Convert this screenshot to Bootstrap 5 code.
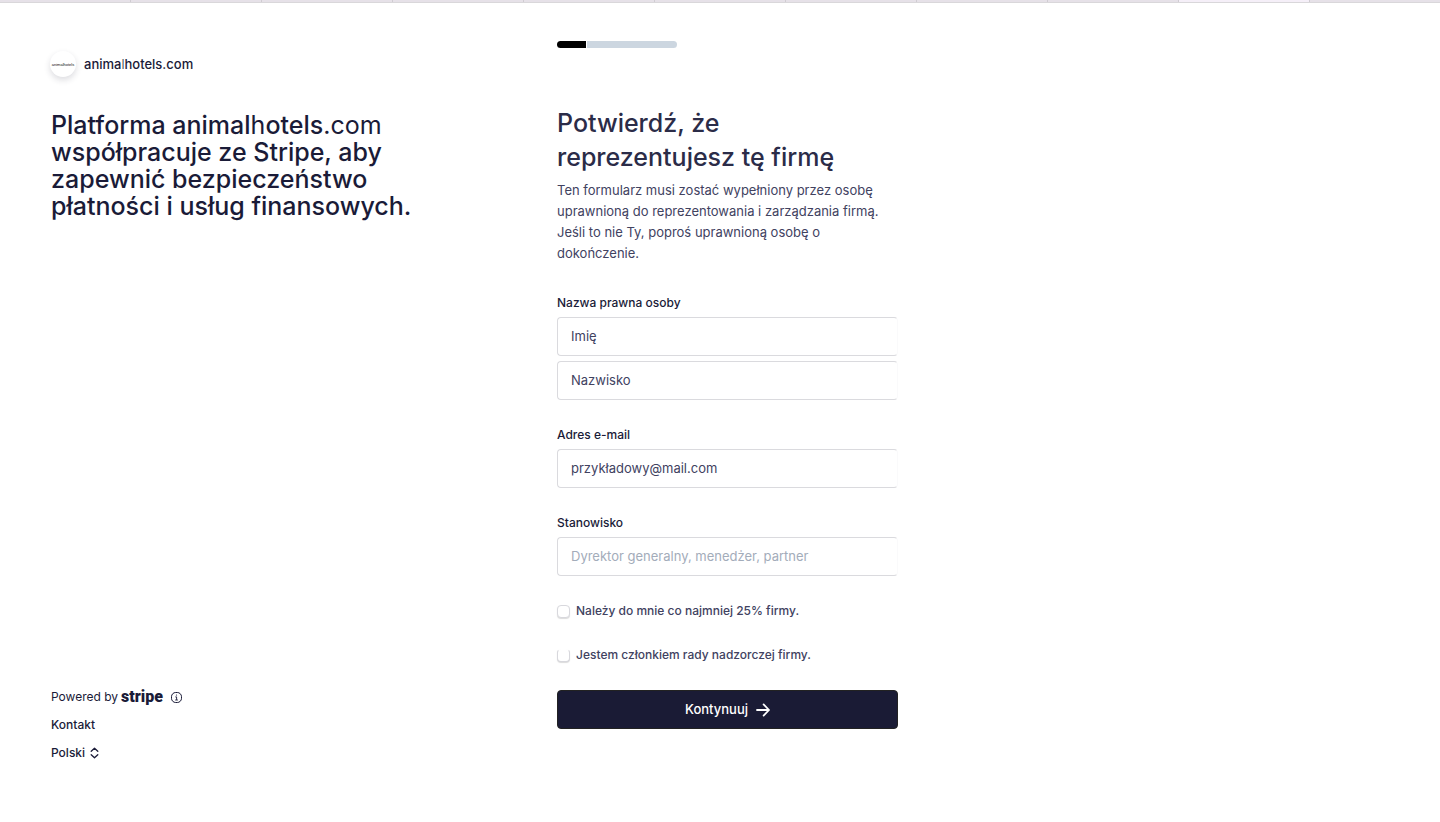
<!DOCTYPE html>
<html lang="pl">
<head>
<meta charset="utf-8">
<meta name="viewport" content="width=device-width, initial-scale=1">
<title>Potwierdź, że reprezentujesz tę firmę</title>
<link href="https://cdn.jsdelivr.net/npm/bootstrap@5.3.0/dist/css/bootstrap.min.css" rel="stylesheet">
<style>
  :root { --ink: #1a1b38; --body: #41425f; --line: #dadade; }
  body { font-family: Inter, "Liberation Sans", sans-serif; font-size: 13px; line-height: 21px; color: var(--ink); background: #fff; }
  a { color: inherit; text-decoration: none; }

  /* strip of browser tabs above the page */
  .tab-strip { height: 3px; background: #e6e1e8; border-bottom: 1px solid #d9d7da; }
  .tab-strip span { border-right: 1px solid #d0ccd2; }
  .tab-strip span:last-child { border-right: 0; }
  .tab-strip .is-open { background: #f5eff8; }

  .side-panel { padding: 48px 0 60px 51px; }
  .form-panel { padding: 38px 24px 60px 0; }
  @media (min-width: 992px) {
    .side-panel { flex: 0 0 557px; }
    .form-panel { flex: 0 1 365px; }
  }
  @media (max-width: 991px) {
    .form-panel { padding-left: 51px; }
  }

  .avatar { width: 26px; height: 26px; margin-left: -1px; font: 4px "Liberation Sans", sans-serif; color: #111; box-shadow: 0 3px 6px rgba(40, 40, 60, .16); }
  .brand-name { font-size: 13px; font-weight: 500; }
  .thin { font-weight: 300; }
  .normal { font-weight: 400; }
  .pitch { font-size: 25px; line-height: 27px; font-weight: 500; margin-top: 35px; max-width: 400px; }

  .side-foot { font-size: 12px; line-height: 18px; gap: 10px; }
  .stripe-mark { font: 900 16px/18px Roboto, "Liberation Sans", sans-serif; margin-left: 3px; }
  .lang-select { appearance: none; border: 0; background: none; padding: 0; color: inherit; font-weight: 500; }

  .steps { width: 120px; height: 7px; gap: 1px; border-radius: 4px; }
  .steps div { background: #ccd6e0; }
  .steps .done { background: #000; }

  .title { font-size: 25px; line-height: 34px; font-weight: 500; color: #2b2c48; margin: 58px 0 6px; }
  .lede { color: var(--body); margin: 0 0 28px; }
  .field-label { display: block; font-size: 12px; line-height: 21px; font-weight: 500; margin: 0 0 4px; padding: 0; }
  .form-control { height: 39px; padding: 0 13px 1px; font-size: 13px; color: var(--body); border: 1px solid var(--line); border-right-color: #fafafb; border-radius: 4px; }
  .form-control + .form-control { margin-top: 5px; }
  .form-control::placeholder { color: var(--body); opacity: 1; }
  .form-control.hinted::placeholder { color: #a3acba; }
  .group { margin-bottom: 24px; }
  .check-row { height: 20px; gap: 6px; margin-bottom: 24px; }
  .check-row .form-check-input { width: 13px; height: 13px; margin: 2px 0 0; border: 1px solid #d8d8dd; border-radius: 4px; box-shadow: 0 1px 1px rgba(0, 0, 0, .14); }
  .check-row .open-top { border-top-color: transparent; }
  .check-row label { font-size: 12px; font-weight: 500; color: var(--body); }
  .btn-next { height: 39px; margin-top: 26px; background: #1a1b35; border: 1px solid #222; border-radius: 4px; color: #fff; font-size: 13px; font-weight: 500; gap: 8px; padding: 0; }
  .btn-next:hover { background: #2b2c48; color: #fff; }
</style>
</head>
<body>
<div class="min-vh-100 d-flex flex-column">
  <div class="tab-strip d-flex" aria-hidden="true">
    <span class="flex-fill"></span><span class="flex-fill"></span><span class="flex-fill"></span><span class="flex-fill"></span><span class="flex-fill"></span><span class="flex-fill"></span><span class="flex-fill"></span><span class="flex-fill"></span><span class="flex-fill"></span><span class="flex-fill is-open"></span><span class="flex-fill"></span>
  </div>
  <div class="d-flex flex-column flex-lg-row flex-grow-1">
    <aside class="side-panel d-flex flex-column">
      <a href="#" class="d-flex align-items-center">
        <span class="avatar rounded-circle bg-white d-flex align-items-center justify-content-center">animalhotels</span>
        <span class="brand-name ms-2">anima<span class="thin">l</span>hotels.com</span>
      </a>
      <h1 class="pitch mb-4">Platforma animal<span class="normal">h</span>otels<span class="normal">.com</span> współpracuje ze Stripe, aby zapewnić bezpieczeństwo płatności i usług finansowych.</h1>
      <div class="side-foot d-flex flex-column align-items-start mt-auto">
        <a href="#" class="d-flex align-items-center">Powered by<span class="stripe-mark">stripe</span>
          <svg class="ms-2" width="11" height="11" viewBox="0 0 11 11" fill="none" stroke="currentColor" role="img" aria-label="Informacje"><rect x=".5" y=".5" width="10" height="10" rx="4.2"/><path d="M4.3 4.9h1.3v3M4.2 8h2.7" stroke-width=".9"/><circle cx="5.5" cy="3" r=".6" fill="currentColor" stroke="none"/></svg>
        </a>
        <a href="#" class="fw-medium">Kontakt</a>
        <label class="d-flex align-items-center">
          <select class="lang-select" aria-label="Język"><option>Polski</option></select>
          <svg class="ms-1" width="9" height="12" viewBox="0 0 9 12" fill="none" stroke="currentColor" stroke-width="1.3" stroke-linecap="round" stroke-linejoin="round"><path d="M1.2 4.3 4.5 1.2l3.3 3.1M1.2 7.7l3.3 3.1 3.3-3.1"/></svg>
        </label>
      </div>
    </aside>
    <main class="form-panel">
      <div class="steps d-flex overflow-hidden" role="progressbar" aria-label="Postęp" aria-valuenow="24" aria-valuemin="0" aria-valuemax="100"><div class="done" style="width:24%"></div><div class="flex-fill"></div></div>
      <h2 class="title">Potwierdź, że reprezentujesz tę firmę</h2>
      <p class="lede">Ten formularz musi zostać wypełniony przez osobę uprawnioną do reprezentowania i zarządzania firmą. Jeśli to nie Ty, poproś uprawnioną osobę o dokończenie.</p>
      <form>
        <div class="group">
          <label class="field-label" for="first">Nazwa prawna osoby</label>
          <input class="form-control" id="first" type="text" placeholder="Imię">
          <input class="form-control" id="last" type="text" placeholder="Nazwisko" aria-label="Nazwisko">
        </div>
        <div class="group">
          <label class="field-label" for="mail">Adres e-mail</label>
          <input class="form-control" id="mail" type="email" placeholder="przykładowy@mail.com">
        </div>
        <div class="group">
          <label class="field-label" for="role">Stanowisko</label>
          <input class="form-control hinted" id="role" type="text" placeholder="Dyrektor generalny, menedżer, partner">
        </div>
        <div class="check-row d-flex align-items-center"><input class="form-check-input" type="checkbox" id="owner"><label for="owner">Należy do mnie co najmniej 25% firmy.</label></div>
        <div class="check-row d-flex align-items-center"><input class="form-check-input open-top" type="checkbox" id="board"><label for="board">Jestem członkiem rady nadzorczej firmy.</label></div>
        <button type="submit" class="btn btn-next w-100 d-flex align-items-center justify-content-center">Kontynuuj
          <svg width="14" height="14" viewBox="0 0 14 14" fill="none" stroke="currentColor" stroke-width="1.8" stroke-linecap="round" stroke-linejoin="round"><path d="M1 7h12M7.6 1.4 13 7l-5.4 5.6"/></svg>
        </button>
      </form>
    </main>
  </div>
</div>
<script src="https://cdn.jsdelivr.net/npm/bootstrap@5.3.0/dist/js/bootstrap.bundle.min.js"></script>
</body>
</html>
